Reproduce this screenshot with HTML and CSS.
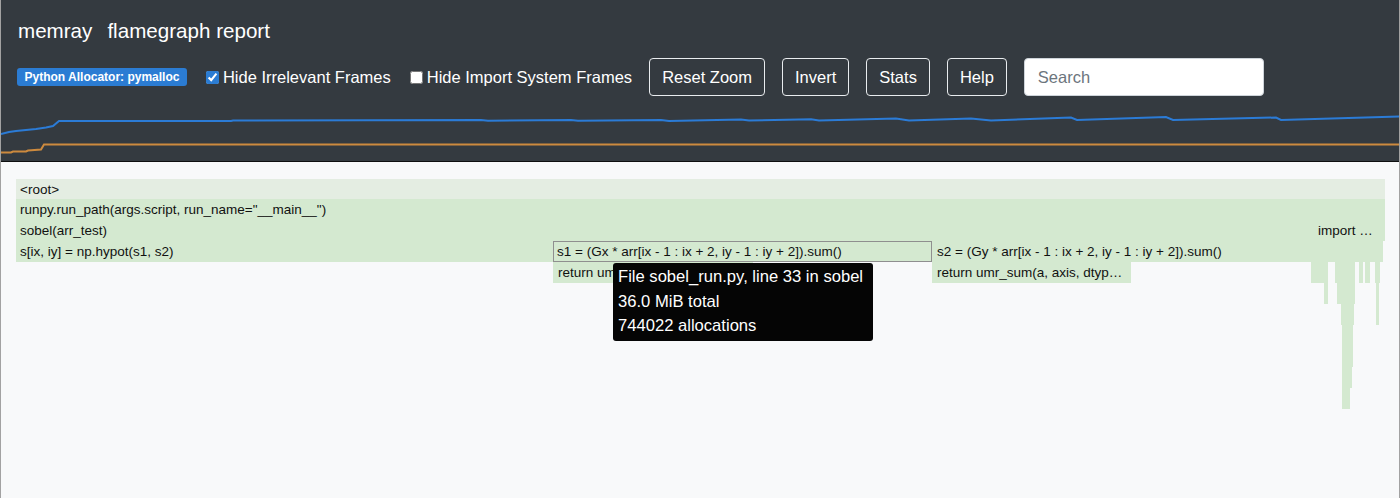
FILE: index.html
```html
<!DOCTYPE html>
<html lang="en">
<head>
<meta charset="utf-8">
<title>memray flamegraph report</title>
<link rel="stylesheet" href="styles.css">
</head>
<body>
<div class="page">
  <header class="topbar">
    <div class="brand"><span class="brand-name">memray</span><span class="brand-sub">flamegraph report</span></div>
    <div class="toolbar">
      <span class="badge">Python Allocator: pymalloc</span>
      <label class="check"><input type="checkbox" checked>Hide Irrelevant Frames</label>
      <label class="check check-last"><input type="checkbox">Hide Import System Frames</label>
      <button class="btn">Reset Zoom</button>
      <button class="btn">Invert</button>
      <button class="btn">Stats</button>
      <button class="btn">Help</button>
      <input class="search" type="text" placeholder="Search">
    </div>
    <div class="chart">
      <svg class="chart-svg" width="1400" height="61" viewBox="0 0 1400 61">
        <polyline class="line-blue" points="0,34 8,32 15,31 25,30 35,29 45,27.5 52,26 58,21 230,21 232,20.5 480,20 487,20.8 570,20 577,20.8 660,20 668,21 740,19.6 748,20.6 810,19.2 818,20.4 895,18.5 908,20.6 970,18.5 990,20.5 1070,17.5 1076,20 1165,17 1172,20 1275,17.5 1280,20 1400,16.5"/>
        <polyline class="line-orange" points="0,52.5 10,52.5 12,51.5 25,51.5 27,50.5 40,49.5 43,44.5 1400,44.5"/>
      </svg>
    </div>
  </header>
  <main class="content">
    <div class="flame">
      <svg class="flame-svg" width="1384" height="232" viewBox="0 0 1384 232">
        <rect class="f-root" x="0" y="0" width="1369" height="20"/>
        <text x="4" y="15">&lt;root&gt;</text>
        <rect class="f" x="0" y="20" width="1369" height="21"/>
        <text x="4" y="35">runpy.run_path(args.script, run_name="__main__")</text>
        <rect class="f" x="0" y="41" width="1297" height="21"/>
        <text x="4" y="56">sobel(arr_test)</text>
        <rect class="f" x="1297" y="41" width="72" height="21"/>
        <text x="1302" y="56">import …</text>
        <rect class="f" x="0" y="62" width="537" height="21"/>
        <text x="4" y="77">s[ix, iy] = np.hypot(s1, s2)</text>
        <rect class="f" x="916" y="62" width="379" height="21"/>
        <text x="921" y="77">s2 = (Gy * arr[ix - 1 : ix + 2, iy - 1 : iy + 2]).sum()</text>
        <rect class="f" x="1295" y="62" width="72" height="21"/>
        <rect class="f" x="537" y="83" width="200" height="21"/>
        <text x="542" y="98">return um</text>
        <rect class="f" x="916" y="83" width="199" height="21"/>
        <text x="921" y="98">return umr_sum(a, axis, dtyp…</text>
        <rect class="f" x="1295" y="83" width="17" height="21"/>
        <rect class="f" x="1308" y="104" width="4" height="21"/>
        <rect class="f" x="1319" y="83" width="20" height="21"/>
        <rect class="f" x="1321" y="104" width="18" height="21"/>
        <rect class="f" x="1325" y="125" width="13" height="21"/>
        <rect class="f" x="1326" y="146" width="11" height="21"/>
        <rect class="f" x="1326" y="167" width="11" height="21"/>
        <rect class="f" x="1326" y="188" width="10" height="21"/>
        <rect class="f" x="1326" y="209" width="8" height="21"/>
        <rect class="f" x="1343" y="83" width="4" height="21"/>
        <rect class="f" x="1349" y="83" width="5" height="21"/>
        <rect class="f" x="1359" y="83" width="5" height="21"/>
        <rect class="f" x="1360" y="104" width="3" height="42"/>
        <rect class="f f-hover" x="537.5" y="62.5" width="378" height="20"/>
        <text x="541" y="77">s1 = (Gx * arr[ix - 1 : ix + 2, iy - 1 : iy + 2]).sum()</text>
      </svg>
      <div class="tooltip">
        <div>File sobel_run.py, line 33 in sobel</div>
        <div>36.0 MiB total</div>
        <div>744022 allocations</div>
      </div>
    </div>
  </main>
</div>
</body>
</html>
```

FILE: styles.css
```css
* { box-sizing: border-box; }
html, body {
  margin: 0;
  padding: 0;
  background: #f8f9fa;
  font-family: "Liberation Sans", Arial, sans-serif;
}
.page {
  width: 1400px;
  height: 498px;
  overflow: hidden;
  border-left: 1px solid rgba(140, 140, 140, 0.8);
  border-right: 1px solid rgba(140, 140, 140, 0.8);
}
.topbar {
  background: #343a40;
  padding-top: 16px;
  border-bottom: 1px solid #0e0f10;
  height: 162px;
}
.brand {
  display: flex;
  align-items: center;
  height: 30px;
  padding-left: 17px;
  color: #fff;
  font-size: 20.6px;
  line-height: 30px;
}
.brand-name { margin-right: 15px; }
.toolbar {
  display: flex;
  align-items: center;
  height: 38px;
  margin-top: 12px;
  padding-left: 16px;
}
.badge {
  display: inline-block;
  background: #2b7cd3;
  color: #fff;
  font-weight: 700;
  font-size: 12px;
  line-height: 18px;
  height: 18px;
  padding: 0 7.5px;
  border-radius: 3px;
  margin-right: 15px;
  white-space: nowrap;
}
.check {
  display: flex;
  align-items: center;
  color: #fff;
  font-size: 16.5px;
  line-height: 24px;
  margin-right: 15px;
  white-space: nowrap;
}
.check input {
  margin: 0 4px 0 4px;
  width: 13px;
  height: 13px;
  accent-color: #2b7cd3;
}
.check-last { margin-right: 0; }
.btn {
  margin-left: 17px;
  height: 38px;
  padding: 0 12px;
  background: transparent;
  color: #fff;
  border: 1px solid #e9ecef;
  border-radius: 4px;
  font-family: "Liberation Sans", Arial, sans-serif;
  font-size: 16.5px;
  line-height: 24px;
}
.search {
  margin-left: 17px;
  width: 240px;
  height: 38px;
  padding: 0 13px;
  background: #fff;
  border: 1px solid #ced4da;
  border-radius: 4px;
  font-family: "Liberation Sans", Arial, sans-serif;
  font-size: 16.5px;
  color: #495057;
}
.search::placeholder { color: #6c757d; }
.chart {
  margin-top: 4px;
  height: 61px;
}
.chart-svg { display: block; }
.line-blue {
  fill: none;
  stroke: #2b7bd6;
  stroke-width: 2;
}
.line-orange {
  fill: none;
  stroke: #cd8a3e;
  stroke-width: 2;
}
.content {
  padding-top: 17px;
  padding-left: 15px;
}
.flame {
  position: relative;
  width: 1384px;
  height: 232px;
}
.flame-svg {
  display: block;
  font-family: "Liberation Sans", Arial, sans-serif;
  font-size: 13.5px;
}
.flame-svg text { fill: #111; }
.f-root { fill: #e4ede2; }
.f { fill: #d4e9d0; }
.f-hover {
  stroke: #8f8f8f;
  stroke-width: 1;
}
.tooltip {
  position: absolute;
  left: 597px;
  top: 84px;
  width: 260px;
  height: 78px;
  padding: 2px 5px;
  background: #050505;
  color: #fff;
  border-radius: 3px;
  font-size: 16.6px;
  line-height: 24.5px;
  white-space: nowrap;
}
```
